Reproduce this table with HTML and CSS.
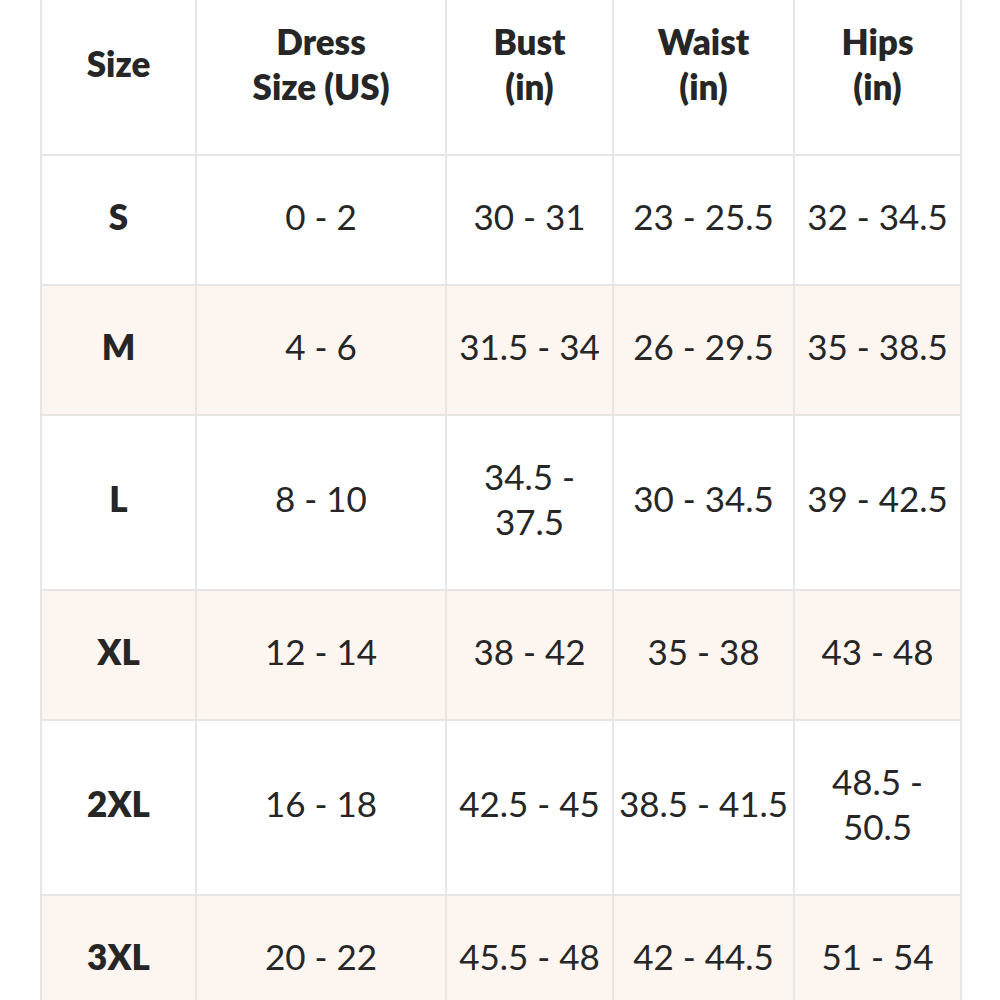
FILE: index.html
```html
<!DOCTYPE html>
<html>
<head>
<meta charset="utf-8">
<link rel="stylesheet" href="styles.css">
</head>
<body>
<div class="page">
<table class="chart">
  <colgroup>
    <col class="c1"><col class="c2"><col class="c3"><col class="c4"><col class="c5">
  </colgroup>
  <thead>
    <tr><th>Size</th><th>Dress<br>Size (US)</th><th>Bust<br>(in)</th><th>Waist<br>(in)</th><th>Hips<br>(in)</th></tr>
  </thead>
  <tbody>
    <tr><th>S</th><td>0 - 2</td><td>30 - 31</td><td>23 - 25.5</td><td>32 - 34.5</td></tr>
    <tr class="alt"><th>M</th><td>4 - 6</td><td>31.5 - 34</td><td>26 - 29.5</td><td>35 - 38.5</td></tr>
    <tr><th>L</th><td>8 - 10</td><td>34.5 -<br>37.5</td><td>30 - 34.5</td><td>39 - 42.5</td></tr>
    <tr class="alt"><th>XL</th><td>12 - 14</td><td>38 - 42</td><td>35 - 38</td><td>43 - 48</td></tr>
    <tr><th>2XL</th><td>16 - 18</td><td>42.5 - 45</td><td>38.5 - 41.5</td><td>48.5 -<br>50.5</td></tr>
    <tr class="alt"><th>3XL</th><td>20 - 22</td><td>45.5 - 48</td><td>42 - 44.5</td><td>51 - 54</td></tr>
  </tbody>
</table>
</div>
</body>
</html>
```
FILE: styles.css
```css
html, body {
  margin: 0;
  padding: 0;
  background: #ffffff;
}
.page {
  width: 1000px;
  height: 1000px;
  overflow: hidden;
}
.chart {
  margin: -21px 0 0 40px;
  width: 920px;
  border-collapse: collapse;
  table-layout: fixed;
  font-family: Lato, "Liberation Sans", sans-serif;
  color: #262626;
}
.c1 { width: 155px; }
.c2 { width: 250px; }
.c3 { width: 167px; }
.c4 { width: 181px; }
.c5 { width: 167px; }
.chart th, .chart td {
  border: 2px solid #e6e6e6;
  text-align: center;
  vertical-align: middle;
  padding: 37.5px 2px 45.5px;
  font-size: 35px;
  line-height: 45px;
  white-space: nowrap;
}
.chart th {
  font-weight: 800;
}
.chart td {
  font-weight: 400;
}
.alt th, .alt td {
  background: #fdf5ef;
}
```
